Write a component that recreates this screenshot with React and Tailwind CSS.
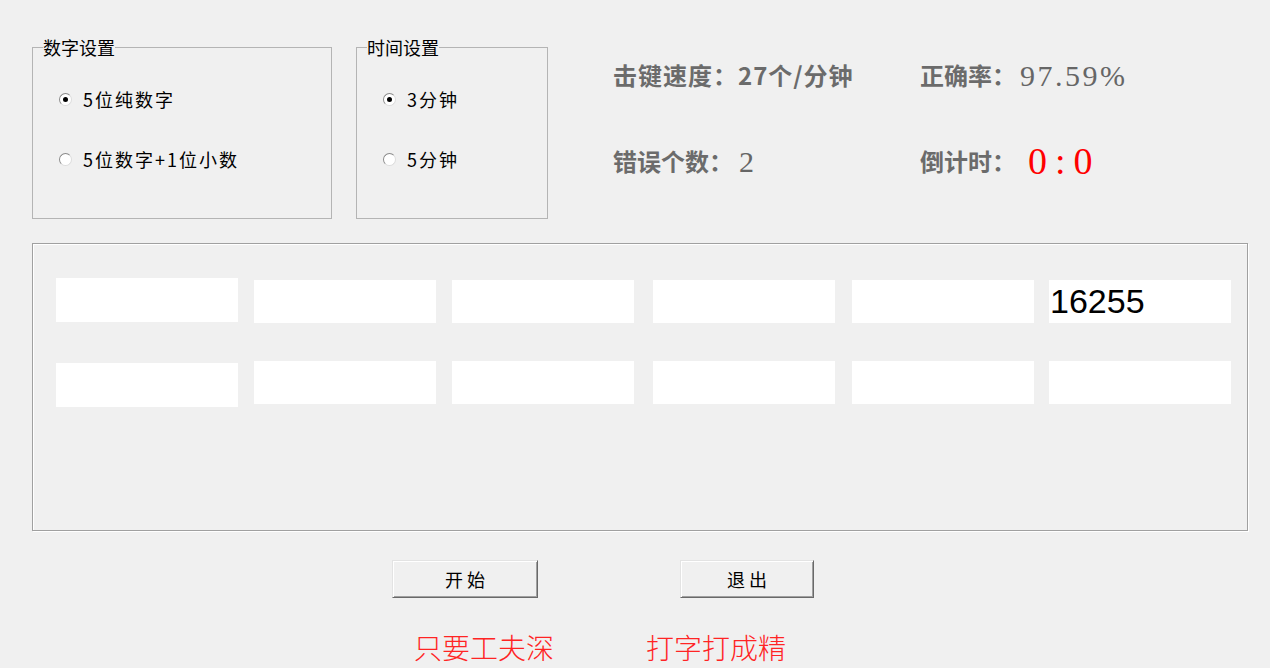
import React from 'react';

const cjk = "font-['Noto_Sans_CJK_SC','Noto_Sans',sans-serif]";
const serif = "font-['Liberation_Serif','Noto_Sans_CJK_SC',serif]";

const Radio = ({ checked, label }) => (
  <div className="flex items-center h-[20px]">
    <span className="w-[13px] h-[13px] rounded-full bg-white border border-t-[#8a8a8a] border-l-[#8a8a8a] border-b-[#dcdcdc] border-r-[#dcdcdc] flex items-center justify-center">
      {checked && <span className="w-[5px] h-[5px] rounded-full bg-black" />}
    </span>
    <span className="ml-[11px] text-[18px] tracking-[2px] text-black leading-[20px]">{label}</span>
  </div>
);

const GroupBox = ({ title, className, options }) => (
  <fieldset className={`h-[182px] border border-[#b4b4b4] px-[10px] ${className}`}>
    <legend className="text-[18px] leading-[20px] text-black">{title}</legend>
    <div className="pl-[16px] flex flex-col gap-[40px] mt-[32px]">
      {options.map((o) => (
        <Radio key={o.label} checked={o.checked} label={o.label} />
      ))}
    </div>
  </fieldset>
);

const Stats = () => (
  <div className="self-start ml-[65px] mt-[22px] grid grid-cols-[307px_auto] gap-y-[54px] text-[24px] font-bold text-[#6b6b6b]">
    <div className="flex items-center h-[32px]">
      <span className="tracking-[1px]">击键速度：27个/分钟</span>
    </div>
    <div className="flex items-center h-[32px]">
      <span>正确率：</span>
      <span className={`${serif} font-normal text-[30px] tracking-[2.5px] text-[#666666] ml-[4px]`}>97.59%</span>
    </div>
    <div className="flex items-center h-[32px]">
      <span>错误个数：</span>
      <span className={`${serif} font-normal text-[30px] text-[#666666] ml-[6px]`}>2</span>
    </div>
    <div className="flex items-center h-[32px]">
      <span>倒计时：</span>
      <span className={`${serif} font-normal text-[38px] tracking-[8px] text-[#ff0000] ml-[12px]`}>0:0</span>
    </div>
  </div>
);

const Cell = ({ className, value }) => (
  <div className={`w-[182px] bg-white text-black font-['Liberation_Sans',Arial,sans-serif] text-[34px] leading-[43px] pl-[1px] ${className}`}>
    {value}
  </div>
);

const row1 = [
  { cls: 'h-[44px]' },
  { cls: 'h-[43px] mt-[2px] ml-[16px]' },
  { cls: 'h-[43px] mt-[2px] ml-[16px]' },
  { cls: 'h-[43px] mt-[2px] ml-[19px]' },
  { cls: 'h-[43px] mt-[2px] ml-[17px]' },
  { cls: 'h-[43px] mt-[2px] ml-[15px]', value: '16255' },
];

const row2 = [
  { cls: 'h-[44px] mt-[2px]' },
  { cls: 'h-[43px] ml-[16px]' },
  { cls: 'h-[43px] ml-[16px]' },
  { cls: 'h-[43px] ml-[19px]' },
  { cls: 'h-[43px] ml-[17px]' },
  { cls: 'h-[43px] ml-[15px]' },
];

const WinButton = ({ children, className }) => (
  <button className={`h-[38px] bg-[#f0f0f0] border border-t-[#e3e3e3] border-l-[#e3e3e3] border-b-[#696969] border-r-[#696969] shadow-[inset_1px_1px_0_#ffffff,inset_-1px_-1px_0_#a0a0a0] text-[18px] tracking-[4px] pl-[4px] text-black ${className}`}>
    {children}
  </button>
);

export default function App() {
  return (
    <div className={`w-[1270px] h-[668px] bg-[#f0f0f0] overflow-hidden ${cjk}`}>
      <div className="flex pt-[37px] pl-[32px]">
        <GroupBox
          title="数字设置"
          className="w-[300px]"
          options={[
            { label: '5位纯数字', checked: true },
            { label: '5位数字+1位小数', checked: false },
          ]}
        />
        <GroupBox
          title="时间设置"
          className="w-[192px] ml-[24px]"
          options={[
            { label: '3分钟', checked: true },
            { label: '5分钟', checked: false },
          ]}
        />
        <Stats />
      </div>

      <div className="ml-[32px] mt-[24px] w-[1216px] h-[288px] border border-[#a0a0a0] shadow-[inset_1px_1px_0_#ffffff,1px_1px_0_#ffffff] pl-[23px] pt-[34px]">
        <div className="flex items-start">
          {row1.map((c, i) => (
            <Cell key={i} className={c.cls} value={c.value} />
          ))}
        </div>
        <div className="flex items-start mt-[38px]">
          {row2.map((c, i) => (
            <Cell key={i} className={c.cls} />
          ))}
        </div>
      </div>

      <div className="flex mt-[29px] pl-[392px]">
        <WinButton className="w-[146px]">开始</WinButton>
        <WinButton className="w-[134px] ml-[142px]">退出</WinButton>
      </div>

      <div className="flex mt-[31px] pl-[414px] text-[28px] leading-[36px] text-[#ff2424] font-light">
        <span>只要工夫深</span>
        <span className="ml-[92px]">打字打成精</span>
      </div>
    </div>
  );
}
